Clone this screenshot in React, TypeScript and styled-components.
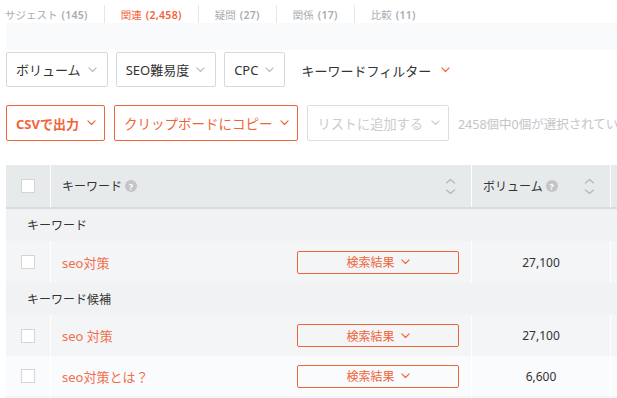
import React from "react";
import styled, { createGlobalStyle } from "styled-components";

const ORANGE = "#f1643a";

const Global = createGlobalStyle`
  html, body { margin: 0; padding: 0; background: #fff; }
  body {
    font-family: "Noto Sans", "Noto Sans CJK JP", sans-serif;
    color: #333;
    width: 617px;
    height: 398px;
    overflow: hidden;
  }
`;

const Page = styled.div`
  width: 617px;
  overflow: hidden;
`;

const Tabs = styled.div`
  display: flex;
  align-items: flex-end;
  height: 23px;
  padding-left: 5px;
`;

const Tab = styled.div<{ $active?: boolean; $first?: boolean }>`
  display: flex;
  align-items: center;
  height: 18px;
  padding: 2px 16px 0 ${(p) => (p.$first ? 0 : 16)}px;
  box-sizing: border-box;
  border-left: ${(p) => (p.$first ? "none" : "1px solid #e6e7e9")};
  font-size: 10.5px;
  color: ${(p) => (p.$active ? ORANGE : "#a9acb0")};
  white-space: nowrap;
  line-height: 1;
`;

const Count = styled.span`
  font-weight: 600;
  letter-spacing: 0.3px;
  margin-left: 4px;
`;

const Strip = styled.div`
  margin-left: 6px;
  height: 27px;
  background: #f9fafc;
`;

const Row = styled.div<{ $mt: number; $gap: number }>`
  display: flex;
  align-items: center;
  gap: ${(p) => p.$gap}px;
  padding-left: 6px;
  margin-top: ${(p) => p.$mt}px;
  white-space: nowrap;
`;

const Select = styled.div`
  display: flex;
  align-items: center;
  box-sizing: border-box;
  height: 35px;
  padding: 0 10px 0 9px;
  border: 1px solid #d6d9dc;
  border-radius: 2px;
  font-size: 13px;
  color: #333;
  gap: 7px;
`;

const Chevron = ({ color, size = 9 }: { color: string; size?: number }) => (
  <svg width={size} height={size * 0.6} viewBox="0 0 10 6" fill="none">
    <path d="M1 1l4 4 4-4" stroke={color} strokeWidth="1.3" strokeLinecap="round" strokeLinejoin="round" />
  </svg>
);

const FilterLink = styled.div`
  display: flex;
  align-items: center;
  gap: 10px;
  margin-left: 8px;
  font-size: 13px;
  color: #333;
  padding-top: 1px;
`;

const ActionBtn = styled.div<{ $disabled?: boolean; $bold?: boolean }>`
  display: flex;
  align-items: center;
  box-sizing: border-box;
  height: 36px;
  padding: 0 8px 0 9px;
  gap: 8px;
  border: 1px solid ${(p) => (p.$disabled ? "#dcdfe2" : ORANGE)};
  border-radius: 2px;
  font-size: ${(p) => (p.$bold ? 13 : p.$disabled ? 13.2 : 13.5)}px;
  font-weight: ${(p) => (p.$bold ? 700 : 400)};
  color: ${(p) => (p.$disabled ? "#c9ccd0" : ORANGE)};
`;

const SelInfo = styled.div`
  font-size: 12.5px;
  color: #c2c5c9;
`;

const Table = styled.div`
  margin-top: 24px;
  margin-left: 6px;
  width: 640px;
`;

const Grid = styled.div<{ $bg: string; $h: number; $border?: boolean }>`
  display: grid;
  grid-template-columns: 44px 421px 139px 30px;
  height: ${(p) => p.$h}px;
  background: ${(p) => p.$bg};
  border-bottom: ${(p) => (p.$border ? "2px solid #d9dcdf" : "none")};
  box-sizing: border-box;
`;

const Cell = styled.div<{ $sep?: boolean; $center?: boolean }>`
  display: flex;
  align-items: center;
  justify-content: ${(p) => (p.$center ? "center" : "flex-start")};
  border-left: ${(p) => (p.$sep ? "1.5px solid #fff" : "none")};
  box-sizing: border-box;
  min-width: 0;
`;

const HeadCell = styled(Cell)`
  justify-content: space-between;
  padding: 0 15px 0 11px;
  font-size: 12px;
  color: #333;
`;

const HeadLabel = styled.span`
  display: flex;
  align-items: center;
  gap: 3px;
`;

const Help = styled.span`
  display: inline-flex;
  align-items: center;
  justify-content: center;
  width: 12px;
  height: 12px;
  border-radius: 50%;
  background: #c3c5c8;
  color: #fff;
  font-size: 9px;
  font-weight: 700;
  line-height: 1;
`;

const Box = styled.span`
  width: 14px;
  height: 14px;
  box-sizing: border-box;
  border: 1px solid #d2d4d7;
  background: #fff;
`;

const Sort = () => (
  <svg width="11" height="17" viewBox="0 0 11 17" fill="none">
    <path d="M1.5 5l4-3.5 4 3.5" stroke="#b4b8bc" strokeWidth="1.2" strokeLinecap="round" strokeLinejoin="round" />
    <path d="M1.5 12l4 3.5 4-3.5" stroke="#b4b8bc" strokeWidth="1.2" strokeLinecap="round" strokeLinejoin="round" />
  </svg>
);

const GroupLabel = styled.div`
  grid-column: 1 / -1;
  display: flex;
  align-items: center;
  padding-left: 21px;
  font-size: 12px;
  color: #333;
`;

const KwCell = styled(Cell)`
  justify-content: space-between;
  padding: 0 12px 0 11px;
`;

const Kw = styled.span`
  font-size: 13px;
  color: #f26f4a;
`;

const SerpBtn = styled.div`
  display: flex;
  align-items: center;
  justify-content: center;
  gap: 6px;
  width: 162px;
  height: 23px;
  box-sizing: border-box;
  border: 1px solid ${ORANGE};
  border-radius: 2px;
  font-size: 12px;
  color: ${ORANGE};
  background: transparent;
`;

const Num = styled.span`
  font-size: 12px;
  color: #333;
`;

type R = { kw: string; vol: string; bg: string; h: number };

const DataRow = ({ kw, vol, bg, h }: R) => (
  <Grid $bg={bg} $h={h}>
    <Cell $center>
      <Box />
    </Cell>
    <KwCell $sep>
      <Kw>{kw}</Kw>
      <SerpBtn>
        検索結果
        <Chevron color={ORANGE} />
      </SerpBtn>
    </KwCell>
    <Cell $sep $center>
      <Num>{vol}</Num>
    </Cell>
    <Cell $sep />
  </Grid>
);

export default function App() {
  return (
    <Page>
      <Global />
      <Tabs>
        <Tab $first>
          サジェスト<Count>(145)</Count>
        </Tab>
        <Tab $active>
          関連<Count>(2,458)</Count>
        </Tab>
        <Tab>
          疑問<Count>(27)</Count>
        </Tab>
        <Tab>
          関係<Count>(17)</Count>
        </Tab>
        <Tab>
          比較<Count>(11)</Count>
        </Tab>
      </Tabs>
      <Strip />
      <Row $mt={2} $gap={8}>
        <Select>
          ボリューム <Chevron color="#b9bcc0" />
        </Select>
        <Select>
          SEO難易度 <Chevron color="#b9bcc0" />
        </Select>
        <Select>
          CPC <Chevron color="#b9bcc0" />
        </Select>
        <FilterLink>
          キーワードフィルター <Chevron color={ORANGE} />
        </FilterLink>
      </Row>
      <Row $mt={18} $gap={9}>
        <ActionBtn $bold>
          CSVで出力 <Chevron color={ORANGE} />
        </ActionBtn>
        <ActionBtn>
          クリップボードにコピー <Chevron color={ORANGE} />
        </ActionBtn>
        <ActionBtn $disabled>
          リストに追加する <Chevron color="#c9ccd0" />
        </ActionBtn>
        <SelInfo>2458個中0個が選択されています</SelInfo>
      </Row>
      <Table>
        <Grid $bg="#e7eaeb" $h={44} $border>
          <Cell $center>
            <Box />
          </Cell>
          <HeadCell $sep>
            <HeadLabel>
              キーワード <Help>?</Help>
            </HeadLabel>
            <Sort />
          </HeadCell>
          <HeadCell $sep>
            <HeadLabel>
              ボリューム <Help>?</Help>
            </HeadLabel>
            <Sort />
          </HeadCell>
          <Cell $sep />
        </Grid>
        <Grid $bg="#f1f2f4" $h={32}>
          <GroupLabel>キーワード</GroupLabel>
        </Grid>
        <DataRow kw="seo対策" vol="27,100" bg="#f4f5f7" h={42} />
        <Grid $bg="#f1f2f4" $h={32}>
          <GroupLabel>キーワード候補</GroupLabel>
        </Grid>
        <DataRow kw="seo 対策" vol="27,100" bg="#f4f5f7" h={41} />
        <DataRow kw="seo対策とは？" vol="6,600" bg="#fafbfc" h={40} />
        <DataRow kw="" vol="" bg="#f4f5f7" h={40} />
      </Table>
    </Page>
  );
}
